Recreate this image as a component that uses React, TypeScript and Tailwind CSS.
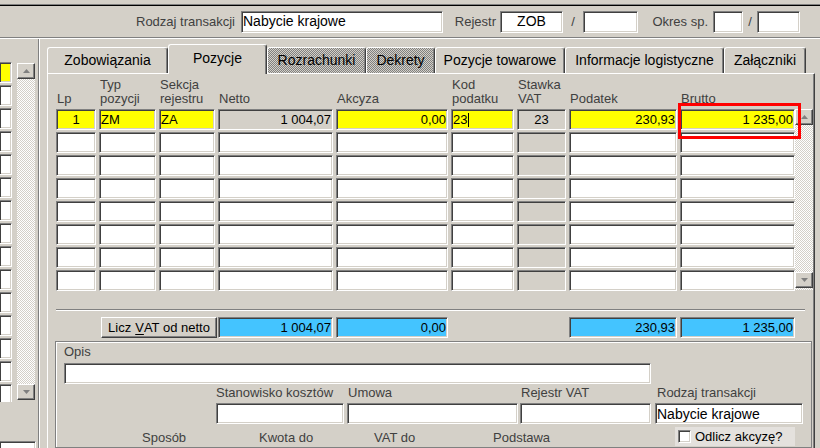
import type { ReactNode } from "react";

const sunken =
  "border border-t-[#808080] border-l-[#808080] border-b-white border-r-white shadow-[inset_1px_1px_0_#404040,inset_-1px_-1px_0_#d4d0c8]";
const raised =
  "border border-t-white border-l-white border-b-[#404040] border-r-[#404040] shadow-[inset_-1px_-1px_0_#808080]";
const checker =
  "[background-image:repeating-conic-gradient(#ffffff_0%_25%,#d4d0c8_0%_50%)] [background-size:2px_2px]";
const dither =
  "[background-image:repeating-conic-gradient(#808080_0%_25%,#d4d0c8_0%_50%)] [background-size:2px_2px]";

const gridCols = "grid grid-cols-[40px_57px_56px_115px_112px_63px_49px_108px_115px] gap-x-[3px]";

const headers = [
  ["", "Lp"],
  ["Typ", "pozycji"],
  ["Sekcja", "rejestru"],
  ["", "Netto"],
  ["", "Akcyza"],
  ["Kod", "podatku"],
  ["Stawka", "VAT"],
  ["", "Podatek"],
  ["", "Brutto"]
];

type Cell = { text?: string; align: string; bg: string; cursor?: boolean; marked?: boolean };

const firstRow: Cell[] = [
  { text: "1", align: "justify-center", bg: "bg-[#ffff00]" },
  { text: "ZM", align: "justify-start", bg: "bg-[#ffff00]" },
  { text: "ZA", align: "justify-start", bg: "bg-[#ffff00]" },
  { text: "1 004,07", align: "justify-end", bg: "bg-[#d4d0c8]" },
  { text: "0,00", align: "justify-end", bg: "bg-[#ffff00]" },
  { text: "23", align: "justify-start", bg: "bg-[#ffff00]", cursor: true },
  { text: "23", align: "justify-center", bg: "bg-[#d4d0c8]" },
  { text: "230,93", align: "justify-end", bg: "bg-[#ffff00]" },
  { text: "1 235,00", align: "justify-end", bg: "bg-[#ffff00]", marked: true }
];

const tabs = [
  { label: "Zobowiązania", width: "w-[121px]" },
  { label: "Pozycje", width: "w-[99px]", active: true },
  { label: "Rozrachunki", width: "w-[99px]", disabled: true },
  { label: "Dekrety", width: "w-[69px]", disabled: true },
  { label: "Pozycje towarowe", width: "w-[130px]" },
  { label: "Informacje logistyczne", width: "w-[159px]" },
  { label: "Załączniki", width: "w-[82px]" }
];

function Field({ className = "", children }: { className?: string; children?: ReactNode }) {
  return <div className={`${sunken} ${className}`}>{children}</div>;
}

function Arrow({ up }: { up?: boolean }) {
  return (
    <div className={`flex h-[16px] w-full shrink-0 items-center justify-center bg-[#d4d0c8] ${raised}`}>
      <svg width="7" height="4" viewBox="0 0 7 4">
        <polygon points={up ? "3.5,0 7,4 0,4" : "0,0 7,0 3.5,4"} fill="#808080" />
      </svg>
    </div>
  );
}

function ScrollBar({ className = "" }: { className?: string }) {
  return (
    <div className={`flex shrink-0 flex-col ${checker} ${className}`}>
      <Arrow up />
      <div className="flex-1" />
      <Arrow />
    </div>
  );
}

function TopBar() {
  return (
    <div className="flex h-[31px] shrink-0 items-center text-[13px] text-[#404040]">
      <div className="w-[130px]" />
      <span className="w-[111px] pr-[6px] text-right">Rodzaj transakcji</span>
      <Field className="flex h-[22px] w-[202px] items-center bg-white px-[1px] text-[14px] text-black">Nabycie krajowe</Field>
      <span className="w-[57px] pr-[4px] text-right">Rejestr</span>
      <Field className="flex h-[22px] w-[63px] items-center justify-center bg-white text-[14px] text-black">ZOB</Field>
      <span className="w-[20px] text-center">/</span>
      <Field className="h-[22px] w-[55px] bg-white" />
      <span className="w-[75px] pr-[5px] text-right">Okres sp.</span>
      <Field className="h-[22px] w-[30px] bg-white" />
      <span className="w-[14px] text-center">/</span>
      <Field className="h-[22px] w-[43px] bg-white" />
    </div>
  );
}

function LeftStrip() {
  return (
    <div className="flex w-[38px] shrink-0 flex-col pt-[23px]">
      <div className="flex h-[340px] shrink-0 gap-[5px] overflow-hidden">
        <div className="flex w-[12px] flex-col gap-[2px]">
          {Array.from({ length: 15 }).map((_, i) => (
            <Field key={i} className={`h-[21px] shrink-0 border-l-0 ${i === 0 ? "bg-[#ffff00]" : "bg-white"}`} />
          ))}
        </div>
        <ScrollBar className="mt-[1px] h-[337px] w-[18px]" />
      </div>
      <Field className="mt-[39px] h-[21px] w-[36px] shrink-0 border-l-0 bg-white" />
    </div>
  );
}

function Tabs() {
  return (
    <div className="flex h-[34px] shrink-0 items-end">
      {tabs.map((tab) => (
        <div
          key={tab.label}
          className={`flex ${tab.width} items-center justify-center rounded-t-[3px] border-t border-l border-r border-t-white border-l-white border-r-[#404040] shadow-[inset_-1px_0_0_#808080] text-[14px] ${
            tab.active ? "relative z-10 -mb-[1px] h-[30px] bg-[#d4d0c8] pb-[2px]" : "h-[26px] bg-[#d4d0c8]"
          } ${tab.disabled ? dither : ""}`}
        >
          {tab.label}
        </div>
      ))}
    </div>
  );
}

function PositionsGrid() {
  return (
    <div className="flex">
      <div className={`${gridCols} grid-rows-[33px_repeat(8,21px)] gap-y-[2px]`}>
        {headers.map(([top, bottom]) => (
          <div key={bottom} className="flex flex-col justify-end pb-[1px] pl-[1px] text-[13px] leading-[14px] text-[#404040]">
            {top && <span>{top}</span>}
            <span>{bottom}</span>
          </div>
        ))}
        {firstRow.map((cell, i) => (
          <Field key={i} className={`relative flex items-center px-[1px] text-[13px] leading-[17px] ${cell.align} ${cell.bg}`}>
            {cell.text}
            {cell.cursor && <span className="ml-[1px] h-[14px] w-[1px] bg-black" />}
            {cell.marked && (
              <div className="absolute -top-[7px] -right-[7px] -bottom-[10px] -left-[3px] border-[3px] border-[#ff0000]" />
            )}
          </Field>
        ))}
        {Array.from({ length: 7 }).flatMap((_, r) =>
          headers.map((_, c) => <Field key={`${r}-${c}`} className={c === 6 ? "bg-[#d4d0c8]" : "bg-white"} />)
        )}
      </div>
      <ScrollBar className="mt-[35px] h-[181px] w-[18px] pb-[2px]" />
    </div>
  );
}

function Totals() {
  const blue = "flex items-center justify-end bg-[#44c4ff] px-[1px] text-[13px]";
  return (
    <div className={`${gridCols} mt-[6px] h-[21px] grid-rows-[21px]`}>
      <button
        type="button"
        className={`col-span-2 col-start-2 ml-[2px] -mr-[2px] flex items-center justify-center bg-[#d4d0c8] text-[13px] ${raised}`}
      >
        Licz <span className="ml-[4px] underline underline-offset-2">V</span>AT od netto
      </button>
      <Field className={`col-start-4 ${blue}`}>1 004,07</Field>
      <Field className={`col-start-5 ${blue}`}>0,00</Field>
      <Field className={`col-start-8 ${blue}`}>230,93</Field>
      <Field className={`col-start-9 ${blue}`}>1 235,00</Field>
    </div>
  );
}

function DetailsGroup() {
  return (
    <div className="-ml-[1px] mt-[3px] w-[757px] flex-1 border border-[#808080] pl-[8px] pt-[2px] text-[13px] leading-[16px] shadow-[inset_1px_1px_0_#ffffff]">
      <div className="text-[#404040]">Opis</div>
      <Field className="mt-[3px] h-[21px] w-[587px] bg-white" />
      <div className="ml-[152px] mt-[1px] flex text-[#404040]">
        <div className="flex w-[128px] flex-col">
          <span>Stanowisko kosztów</span>
          <Field className="mt-[2px] h-[21px] bg-white" />
        </div>
        <div className="ml-[3px] flex w-[171px] flex-col">
          <span className="pl-[1px]">Umowa</span>
          <Field className="mt-[2px] h-[21px] bg-white" />
        </div>
        <div className="ml-[2px] flex w-[131px] flex-col">
          <span className="pl-[1px]">Rejestr VAT</span>
          <Field className="mt-[2px] h-[21px] bg-white" />
        </div>
        <div className="ml-[4px] flex w-[148px] flex-col">
          <span className="pl-[2px]">Rodzaj transakcji</span>
          <Field className="mt-[2px] flex h-[21px] items-center bg-white px-[1px] text-[14px] text-black">Nabycie krajowe</Field>
        </div>
      </div>
      <div className="mt-[3px] flex h-[19px] text-[#404040]">
        <div className="w-[78px]" />
        <span className="w-[117px] pt-[3px]">Sposób</span>
        <span className="w-[115px] pt-[3px]">Kwota do</span>
        <span className="w-[119px] pt-[3px]">VAT do</span>
        <span className="w-[182px] pt-[3px]">Podstawa</span>
        <label className="flex w-[120px] items-center bg-[#e4e1dd] text-black">
          <Field className="ml-[3px] h-[13px] w-[13px] bg-white" />
          <span className="ml-[4px]">Odlicz akcyzę?</span>
        </label>
      </div>
    </div>
  );
}

export default function App() {
  return (
    <div className="flex h-[448px] w-[820px] select-none flex-col overflow-hidden bg-[#d4d0c8] font-['Liberation_Sans',Arial,sans-serif] text-black">
      <div className="h-[4px] shrink-0" />
      <div className="h-[2px] shrink-0 border-t border-b border-t-[#808080] border-b-black" />
      <TopBar />
      <div className="h-[2px] shrink-0 border-t border-b border-t-[#808080] border-b-white" />
      <div className="flex min-h-0 flex-1">
        <LeftStrip />
        <div className="w-[2px] shrink-0 border-l border-r border-l-[#808080] border-r-white" />
        <div className="w-[7px] shrink-0" />
        <div className="flex w-[768px] shrink-0 flex-col">
          <Tabs />
          <div className="flex flex-1 flex-col border-t border-l border-r border-t-white border-l-white border-r-[#404040] pl-[8px] shadow-[inset_-1px_0_0_#808080]">
            <PositionsGrid />
            <div className="mt-[18px] h-[2px] w-[749px] shrink-0 border-t border-b border-t-[#808080] border-b-white" />
            <Totals />
            <DetailsGroup />
          </div>
        </div>
      </div>
    </div>
  );
}
